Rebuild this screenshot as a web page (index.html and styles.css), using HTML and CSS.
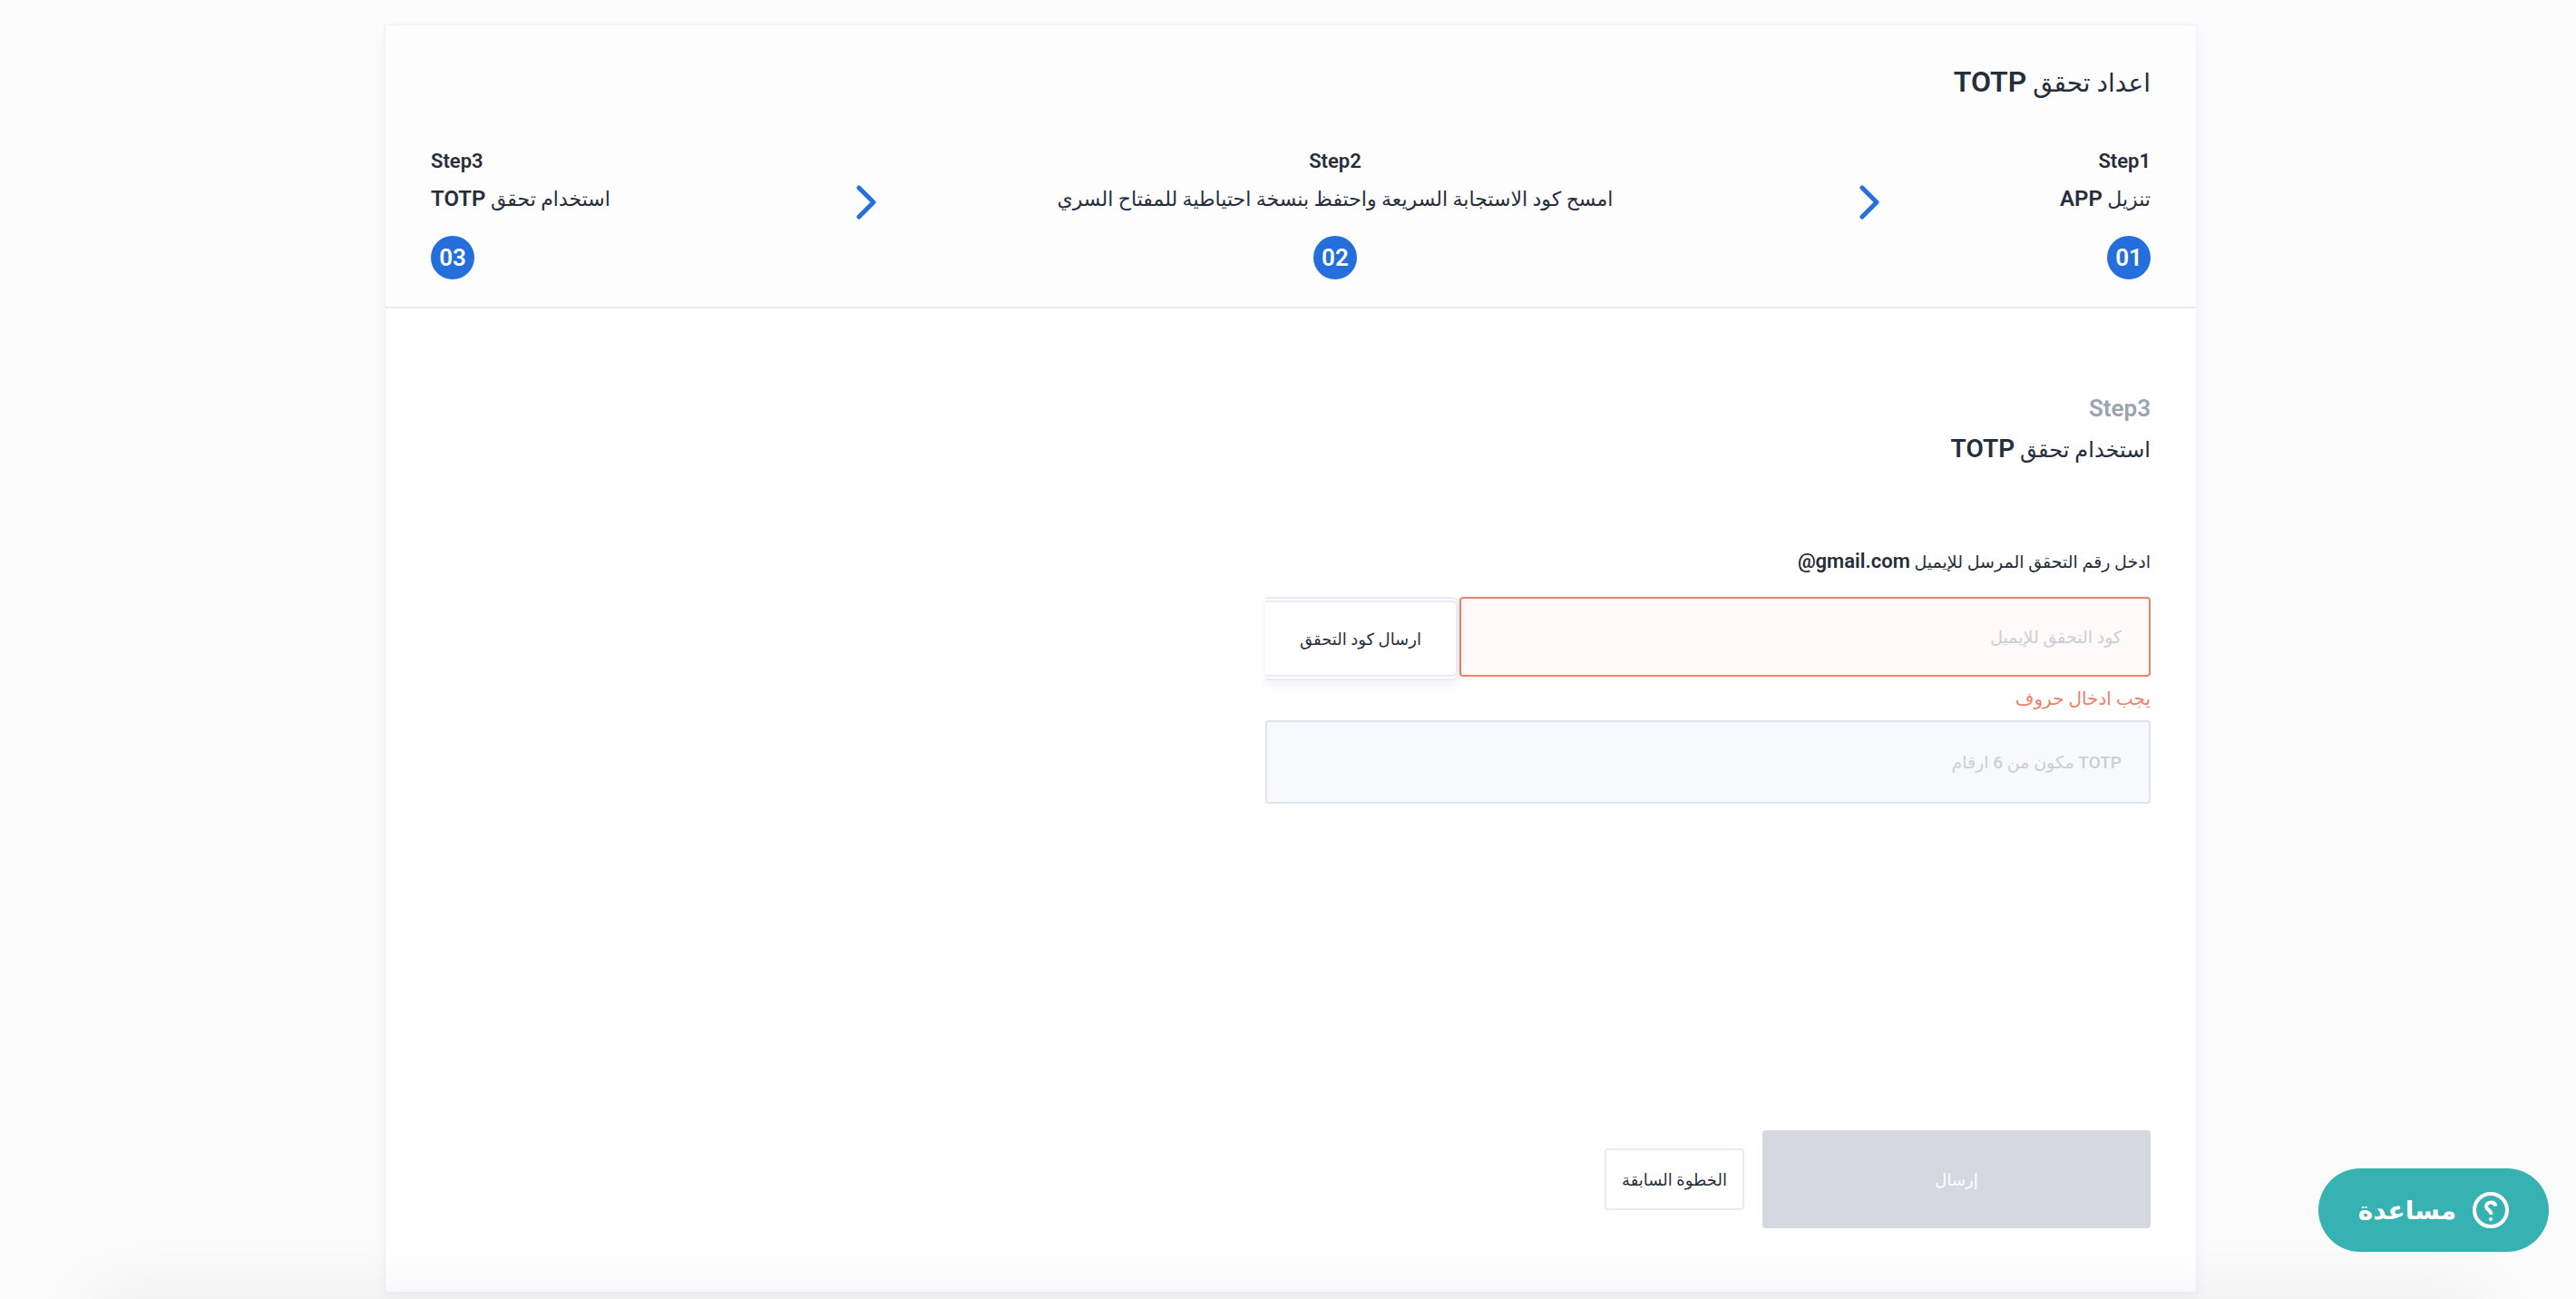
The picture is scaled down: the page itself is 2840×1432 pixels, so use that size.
FILE: index.html
```html
<!DOCTYPE html>
<html lang="ar" dir="rtl">

<head>
  <meta charset="UTF-8">
  <meta name="viewport" content="width=device-width, initial-scale=1.0">
  <title>اعداد تحقق TOTP</title>
  <link rel="stylesheet" href="styles.css">
</head>

<body>
  <main class="page">
    <section class="card">
      <header class="card-header">
        <h1>اعداد تحقق <span class="latin">TOTP</span></h1>
        <ol class="steps">
          <li class="step">
            <span class="step-label">Step1</span>
            <span class="step-text">تنزيل <span class="latin">APP</span></span>
            <span class="step-number">01</span>
          </li>
          <li class="arrow" aria-hidden="true">
            <svg viewBox="0 0 22 38" width="22" height="38">
              <path d="M3 3l16 16L3 35" />
            </svg>
          </li>
          <li class="step step-center">
            <span class="step-label">Step2</span>
            <span class="step-text">امسح كود الاستجابة السريعة واحتفظ بنسخة احتياطية للمفتاح السري</span>
            <span class="step-number">02</span>
          </li>
          <li class="arrow" aria-hidden="true">
            <svg viewBox="0 0 22 38" width="22" height="38">
              <path d="M3 3l16 16L3 35" />
            </svg>
          </li>
          <li class="step step-end">
            <span class="step-label">Step3</span>
            <span class="step-text">استخدام تحقق <span class="latin">TOTP</span></span>
            <span class="step-number">03</span>
          </li>
        </ol>
      </header>

      <form class="card-body">
        <p class="current-step">Step3</p>
        <h2>استخدام تحقق <span class="latin">TOTP</span></h2>

        <div class="fields">
          <label class="field-label" for="email-code">ادخل رقم التحقق المرسل للإيميل <bdi class="latin">@gmail.com</bdi></label>
          <div class="code-row">
            <input class="input input-error" type="text" id="email-code" placeholder="كود التحقق للإيميل" aria-describedby="email-error">
            <div class="send-wrap">
              <button class="send-code" type="button">ارسال كود التحقق</button>
            </div>
          </div>
          <p class="error" id="email-error">يجب ادخال حروف</p>
          <input class="input" type="text" id="totp-code" placeholder="TOTP مكون من 6 ارقام" aria-label="TOTP مكون من 6 ارقام">
        </div>

        <div class="actions">
          <button class="submit" type="submit" disabled>إرسال</button>
          <button class="previous" type="button">الخطوة السابقة</button>
        </div>
      </form>
    </section>
  </main>

  <div class="bottom-shadow"></div>

  <button class="help" type="button">
    <svg viewBox="0 0 40 40" width="40" height="40" aria-hidden="true">
      <circle cx="20" cy="20" r="18" />
      <path d="M25.500 15.500C24 10 15 10.500 15 16C15 20 20.500 19.500 20.500 25" />
      <circle class="dot" cx="20" cy="30" r="2" />
    </svg>
    <span>مساعدة</span>
  </button>
</body>

</html>
```

FILE: styles.css
```css
* {
  box-sizing: border-box;
}

body {
  margin: 0;
  background-color: #fbfbfb;
  color: #272e3b;
  font-family: Roboto, "DejaVu Sans", sans-serif;
  font-size: 24px;
}

h1,
h2,
p,
ol {
  margin: 0;
  padding: 0;
  font-weight: 400;
}

button,
input {
  font-family: inherit;
  font-size: 18px;
}

button {
  cursor: pointer;
}

.latin {
  font-weight: 600;
  line-height: 1;
}

.page {
  min-height: 100vh;
  padding: 26px 0 6px 6px;
  display: flex;
  justify-content: center;
}

.card {
  width: 100%;
  max-width: 2000px;
  background: #fff;
  border: 2px solid #f3f3f9;
  border-radius: 4px;
  box-shadow: 0 8px 16px rgba(30, 30, 80, 0.03);
  display: flex;
  flex-direction: column;
}

.card-header {
  background: #fdfdfd;
  border-bottom: 2px solid #e8ecf1;
  padding: 40px 50px 30px;
}

h1 {
  font-size: 28px;
  line-height: 48px;
}

h1 .latin {
  font-size: 32px;
}

.steps {
  list-style: none;
  margin-top: 44px;
  display: flex;
  justify-content: space-between;
  align-items: flex-start;
}

.step {
  display: flex;
  flex-direction: column;
  align-items: flex-start;
}

.step-center {
  align-items: center;
}

.step-end {
  align-items: flex-end;
}

.step-label {
  font-size: 22px;
  font-weight: 600;
  line-height: 36px;
}

.step-text {
  font-size: 22px;
  line-height: 48px;
}

.step-text .latin {
  font-size: 24px;
}

.step-number {
  width: 48px;
  height: 48px;
  margin-top: 16px;
  border-radius: 50%;
  background: #246fdb;
  color: #fff;
  font-size: 26px;
  font-weight: 600;
  line-height: 48px;
  text-align: center;
}

.arrow {
  display: flex;
  margin-top: 44px;
  margin-left: 72px;
}

.arrow svg {
  fill: none;
  stroke: #246fdb;
  stroke-width: 5;
  stroke-linecap: round;
  stroke-linejoin: round;
}

.card-body {
  flex: 1;
  padding: 90px 50px 70px;
  display: flex;
  flex-direction: column;
}

.current-step {
  color: #9ba3b2;
  font-size: 26px;
  font-weight: 600;
  line-height: 40px;
}

h2 {
  font-size: 24px;
  line-height: 52px;
}

h2 .latin {
  font-size: 28px;
}

.fields {
  width: 100%;
  max-width: 976px;
  margin-top: 80px;
  display: flex;
  flex-direction: column;
}

.field-label {
  font-size: 19px;
  line-height: 36px;
}

.field-label .latin {
  font-size: 22px;
}

.code-row {
  margin-top: 20px;
  display: flex;
  align-items: flex-start;
}

.input {
  width: 100%;
  height: 92px;
  padding: 0 30px;
  border: 2px solid #dfe3ed;
  border-radius: 4px;
  background: #f8f9fb;
  color: #272e3b;
  font-size: 19px;
}

.input::placeholder {
  color: #cbced9;
  font-weight: 500;
  opacity: 1;
}

.code-row .input {
  flex: 1;
  height: 88px;
}

.code-row .input-error {
  border-color: #f08069;
  background: #fffaf8;
}

.send-wrap {
  width: 214px;
  height: 92px;
  padding: 2px 0;
  border: 2px solid #e8ecf1;
  border-left: 0;
  border-radius: 0 8px 8px 0;
  box-shadow: 0 6px 8px rgba(30, 30, 80, 0.05);
}

.send-code {
  width: 100%;
  height: 84px;
  border: 2px solid #e8ecf1;
  border-left: 0;
  border-radius: 0 6px 6px 0;
  background: #fff;
  color: #272e3b;
}

.error {
  color: #f08069;
  font-size: 20px;
  line-height: 40px;
  padding-bottom: 4px;
}

.actions {
  margin-top: auto;
  display: flex;
  align-items: center;
  gap: 20px;
}

.submit {
  width: 428px;
  height: 108px;
  border: 0;
  border-radius: 4px;
  background: #d5d8e0;
  color: #fff;
}

.previous {
  width: 154px;
  height: 68px;
  padding: 0;
  border: 2px solid #e8ecf1;
  border-radius: 4px;
  background: #fff;
  color: #272e3b;
}

/* soft shade along the bottom edge of the window */
.bottom-shadow {
  position: fixed;
  left: 110px;
  right: 110px;
  bottom: -40px;
  height: 30px;
  box-shadow: 0 0 80px 10px rgba(0, 0, 0, 0.08);
  pointer-events: none;
}

.help {
  position: fixed;
  right: 30px;
  bottom: 52px;
  height: 92px;
  padding: 0 44px;
  border: 0;
  border-radius: 46px;
  background: #37b2b2;
  color: #fff;
  font-size: 28px;
  font-weight: 700;
  display: flex;
  align-items: center;
  gap: 18px;
}

.help svg {
  fill: none;
  stroke: #fff;
  stroke-width: 4;
}

.help .dot {
  fill: #fff;
  stroke: none;
}
```
